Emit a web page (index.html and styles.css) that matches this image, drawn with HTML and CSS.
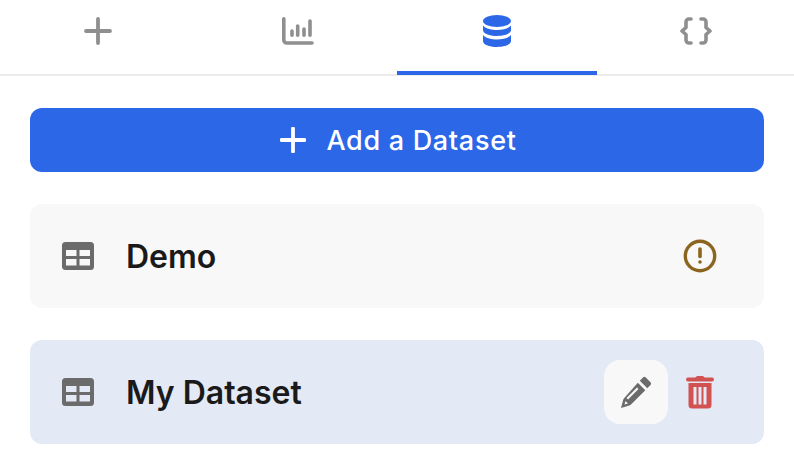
FILE: index.html
```html
<!DOCTYPE html>
<html>

<head>
  <title>Datasets</title>
  <link rel="stylesheet" href="styles.css">
</head>

<body>
  <div class="tabs">
    <div class="tab first">
      <svg width="28" height="28" viewBox="0 0 28 28"><path d="M14 2v24M2 14h24" class="line" stroke-width="3.800"/></svg>
    </div>
    <div class="tab">
      <svg width="32" height="28" viewBox="0 0 32 28"><path d="M1.800 1.800V23a3 3 0 0 0 3 3H30" class="line" stroke-width="3.600"/><path d="M10 14v4.200M15.700 9v9.200M22 12v6.200M28 4v14.200" class="line" stroke-width="3.600"/></svg>
    </div>
    <div class="tab active">
      <svg width="28" height="32" viewBox="0 0 28 32"><ellipse cx="14" cy="6" rx="14" ry="6" class="db"/><path d="M0 10.500C3 14 9 15 14 15s11-1 14-4.500V15c0 3.500-6 6-14 6S0 18.500 0 15z" class="db"/><path d="M0 20c3 3.500 9 4.500 14 4.500S25 23.500 28 20v6c0 3.500-6 6-14 6S0 29.500 0 26z" class="db"/></svg>
    </div>
    <div class="tab last">
      <svg width="32" height="28" viewBox="0 0 32 28"><path d="M11 2H9a3 3 0 0 0-3 3v5.500L2 14l4 3.500V23a3 3 0 0 0 3 3h2M21 2h2a3 3 0 0 1 3 3v5.500l4 3.500-4 3.500V23a3 3 0 0 1-3 3h-2" class="line" stroke-width="3.600"/></svg>
    </div>
  </div>

  <div class="content">
    <button class="add-btn">
      <svg width="26" height="26" viewBox="0 0 26 26"><path d="M13 1.500v23M1.500 13h23" class="line-white" stroke-width="3.800"/></svg>
      <span>Add a Dataset</span>
    </button>

    <div class="dataset">
      <svg class="table-icon" width="32" height="28" viewBox="0 0 32 28"><use href="#table"/></svg>
      <span class="name">Demo</span>
      <div class="actions">
        <svg class="warn" width="34" height="34" viewBox="0 0 34 34"><circle cx="17" cy="17" r="14.700" class="warn-ring"/><path d="M17 10v7.500" class="warn-mark"/><circle cx="17" cy="23" r="1.800" class="warn-dot"/></svg>
      </div>
    </div>

    <div class="dataset selected">
      <svg class="table-icon" width="32" height="28" viewBox="0 0 32 28"><use href="#table"/></svg>
      <span class="name">My Dataset</span>
      <div class="actions row-tools">
        <div class="edit">
          <svg width="34" height="34" viewBox="0 0 34 34"><path class="pencil" d="M24 2.500a2 2 0 0 1 2.800 0l4.700 4.700a2 2 0 0 1 0 2.800l-3.200 3.200-7.500-7.500zM18.800 7.800l7.500 7.500L12 29.600c-.5.500-1 .8-1.700 1L2 33l2.300-8.400c.2-.6.500-1.200 1-1.600zM18 12.500 7.500 23l1.500 1.500L19.500 14zM6.500 26l-1 3.500 3.500-1z" fill-rule="evenodd"/></svg>
        </div>
        <svg class="trash" width="30" height="34" viewBox="0 0 30 34"><path class="trash-fill" fill-rule="evenodd" d="M10.500 2.500C11 1.500 12 1 13 1h4c1 0 2 .5 2.500 1.500H27a2 2 0 0 1 0 4H3a2 2 0 0 1 0-4zM3.500 8h23v22a3.500 3.500 0 0 1-3.500 3.500H7A3.500 3.500 0 0 1 3.500 30zM8.500 12v17.500h3V12zM13.500 12v17.500h3V12zM18.500 12v17.500h3V12z"/></svg>
      </div>
    </div>
  </div>

  <svg class="defs" width="0" height="0">
    <symbol id="table" viewBox="0 0 32 28">
      <path class="table-fill" fill-rule="evenodd" d="M3.500 0h25A3.500 3.500 0 0 1 32 3.500v21a3.500 3.500 0 0 1-3.500 3.500h-25A3.500 3.500 0 0 1 0 24.500v-21A3.500 3.500 0 0 1 3.500 0zM4 8v6h10.500V8zM17.500 8v6H28V8zM4 17v6.500h10.500V17zM17.500 17v6.500H28V17z"/>
    </symbol>
  </svg>
</body>

</html>
```

FILE: styles.css
```css
body {
  margin: 0;
  background: #fff;
  font-family: Inter, "Liberation Sans", sans-serif;
  overflow: hidden;
}

.tabs {
  display: flex;
  height: 74px;
  border-bottom: 2px solid #ececec;
}

.tab {
  width: 199px;
  height: 71px;
  margin-bottom: -1px;
  border-bottom: 4px solid transparent;
  display: flex;
  align-items: center;
  justify-content: center;
}

.tab.first {
  width: 196px;
  padding-right: 2px;
}

.tab.active {
  width: 200px;
}

.tab.last {
  width: 197px;
}

.tab svg {
  margin-top: -9px;
}

.tab.active {
  border-bottom-color: #2b67e7;
}

.line {
  fill: none;
  stroke: #8f8f8f;
  stroke-linecap: round;
  stroke-linejoin: round;
}

.line-white {
  fill: none;
  stroke: #fff;
  stroke-linecap: round;
}

.db {
  fill: #2b67e7;
}

.content {
  padding: 32px 30px 0;
  display: flex;
  flex-direction: column;
  gap: 32px;
}

.add-btn {
  height: 64px;
  border: none;
  border-radius: 12px;
  background: #2b67e7;
  color: #fff;
  font-family: inherit;
  font-size: 27px;
  font-weight: 500;
  letter-spacing: 0.7px;
  display: flex;
  align-items: center;
  justify-content: center;
  gap: 20px;
  padding: 0 0 0 3px;
}

.dataset {
  height: 104px;
  border-radius: 12px;
  background: #f8f8f8;
  display: flex;
  align-items: center;
  padding: 0 32px;
}

.dataset.selected {
  background: #e4e9f6;
}

.table-icon {
  margin-right: 32px;
}

.table-fill {
  fill: #6b6b6b;
}

.name {
  font-size: 32px;
  font-weight: 600;
  color: #1a1a1a;
}

.actions {
  margin-left: auto;
  display: flex;
  align-items: center;
  gap: 17px;
  padding-right: 15px;
}

.actions.row-tools {
  padding-right: 17px;
}

.warn-ring {
  fill: none;
  stroke: #8b6420;
  stroke-width: 3.4;
}

.warn-mark {
  fill: none;
  stroke: #8b6420;
  stroke-width: 3.6;
  stroke-linecap: round;
}

.warn-dot {
  fill: #8b6420;
}

.edit {
  width: 64px;
  height: 64px;
  border-radius: 16px;
  background: #f8f8f8;
  display: flex;
  align-items: center;
  justify-content: center;
}

.pencil {
  fill: #6b6b6b;
}

.trash-fill {
  fill: #d25252;
}

.defs {
  position: absolute;
}
```
